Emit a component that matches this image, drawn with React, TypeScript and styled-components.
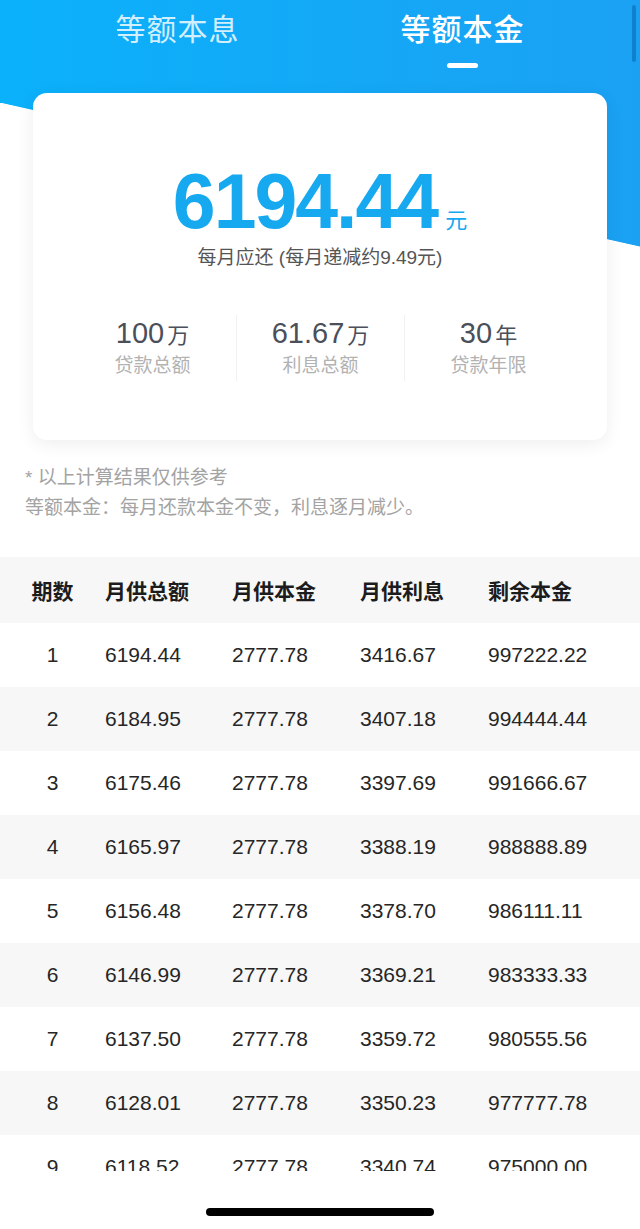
import * as React from "react";
import styled, { createGlobalStyle } from "styled-components";

const GlobalStyle = createGlobalStyle`
  html, body {
    margin: 0;
    padding: 0;
    background: #fff;
  }
  body {
    font-family: "Liberation Sans", "Noto Sans CJK SC", sans-serif;
    -webkit-font-smoothing: antialiased;
  }
`;

const Page = styled.div`
  position: relative;
  width: 640px;
  height: 1229px;
  overflow: hidden;
  display: flex;
  flex-direction: column;
  background: #fff;
`;

// blue header with the slanted lower edge, painted as backgrounds of the top block
const Hero = styled.div`
  display: flex;
  flex-direction: column;
  background:
    linear-gradient(to top right, #fff 50%, transparent 50.3%) 0 103px / 100% 144px no-repeat,
    linear-gradient(to right, #0bb1fb, #1ba1f3) 0 0 / 100% 247px no-repeat;
`;

const Scrollbar = styled.div`
  position: absolute;
  top: 5px;
  right: 4px;
  width: 4px;
  height: 57px;
  border-radius: 2px;
  background: rgba(0, 90, 160, 0.45);
`;

const Tabs = styled.div`
  display: flex;
  justify-content: center;
  padding-top: 12px;
`;

const Tab = styled.div<{ $active?: boolean }>`
  width: 285px;
  display: flex;
  flex-direction: column;
  align-items: center;
  font-size: 30px;
  line-height: 36px;
  letter-spacing: 1px;
  color: ${(p) => (p.$active ? "#fff" : "rgba(255,255,255,0.82)")};
  font-weight: ${(p) => (p.$active ? 500 : 400)};
`;

const Indicator = styled.div<{ $show?: boolean }>`
  margin-top: 15px;
  width: 31px;
  height: 5px;
  border-radius: 3px;
  background: ${(p) => (p.$show ? "#fff" : "transparent")};
`;

const Card = styled.div`
  margin: 25px 33px 0;
  padding: 70px 35px 59px;
  background: #fff;
  border-radius: 14px;
  box-shadow: 0 4px 18px rgba(0, 0, 0, 0.07);
  display: flex;
  flex-direction: column;
  align-items: center;
`;

const Amount = styled.div`
  height: 77px;
  font-size: 77px;
  line-height: 77px;
  font-weight: 700;
  color: #16a9f0;
  letter-spacing: -2px;
  white-space: nowrap;
`;

const Unit = styled.span`
  font-size: 22px;
  line-height: 1;
  font-weight: 400;
  letter-spacing: 0;
  margin-left: 8px;
`;

const Subtitle = styled.div`
  margin-top: 4px;
  font-size: 19px;
  line-height: 28px;
  color: #555;
`;

const Stats = styled.div`
  margin-top: 43px;
  align-self: stretch;
  display: grid;
  grid-template-columns: repeat(3, 1fr);
`;

const Stat = styled.div<{ $divider?: boolean }>`
  display: flex;
  flex-direction: column;
  align-items: center;
  border-left: 1px solid ${(p) => (p.$divider ? "#f1f1f1" : "transparent")};
`;

const StatValue = styled.div`
  height: 36px;
  font-size: 29px;
  line-height: 36px;
  color: #4b4f5a;
  small {
    font-size: 22px;
    line-height: 1;
    margin-left: 3px;
  }
`;

const StatLabel = styled.div`
  font-size: 19px;
  line-height: 30px;
  color: #b2b2b2;
`;

const Notes = styled.div`
  margin-top: 23px;
  padding-left: 25px;
  font-size: 19px;
  line-height: 30px;
  color: #a3a3a3;
`;

const Table = styled.div`
  margin-top: 34px;
  height: 614px;
  overflow: hidden;
`;

const Row = styled.div<{ $shade?: boolean; $head?: boolean }>`
  display: grid;
  grid-template-columns: 105px 127px 128px 128px 1fr;
  align-items: center;
  height: ${(p) => (p.$head ? 66 : 64)}px;
  background: ${(p) => (p.$shade ? "#f7f7f7" : "#fff")};
  font-size: 21px;
  font-weight: ${(p) => (p.$head ? 700 : 400)};
  color: ${(p) => (p.$head ? "#1c1c1c" : "#262626")};
`;

const Cell = styled.div<{ $center?: boolean }>`
  text-align: ${(p) => (p.$center ? "center" : "left")};
  white-space: nowrap;
`;

const BottomBar = styled.div`
  flex: 1;
  display: flex;
  justify-content: center;
  padding-top: 37px;
`;

const HomeIndicator = styled.div`
  width: 228px;
  height: 8px;
  border-radius: 4px;
  background: #000;
`;

const rows = [
  ["1", "6194.44", "2777.78", "3416.67", "997222.22"],
  ["2", "6184.95", "2777.78", "3407.18", "994444.44"],
  ["3", "6175.46", "2777.78", "3397.69", "991666.67"],
  ["4", "6165.97", "2777.78", "3388.19", "988888.89"],
  ["5", "6156.48", "2777.78", "3378.70", "986111.11"],
  ["6", "6146.99", "2777.78", "3369.21", "983333.33"],
  ["7", "6137.50", "2777.78", "3359.72", "980555.56"],
  ["8", "6128.01", "2777.78", "3350.23", "977777.78"],
  ["9", "6118.52", "2777.78", "3340.74", "975000.00"],
];

const stats = [
  { value: "100", unit: "万", label: "贷款总额" },
  { value: "61.67", unit: "万", label: "利息总额" },
  { value: "30", unit: "年", label: "贷款年限" },
];

export default function App() {
  return (
    <Page>
      <GlobalStyle />
      <Hero>
        <Tabs>
          <Tab>
            等额本息
            <Indicator />
          </Tab>
          <Tab $active>
            等额本金
            <Indicator $show />
          </Tab>
        </Tabs>
        <Card>
          <Amount>
            6194.44<Unit>元</Unit>
          </Amount>
          <Subtitle>每月应还 (每月递减约9.49元)</Subtitle>
          <Stats>
            {stats.map((s, i) => (
              <Stat key={s.label} $divider={i > 0}>
                <StatValue>
                  {s.value}
                  <small>{s.unit}</small>
                </StatValue>
                <StatLabel>{s.label}</StatLabel>
              </Stat>
            ))}
          </Stats>
        </Card>
      </Hero>
      <Notes>
        <div>* 以上计算结果仅供参考</div>
        <div>等额本金：每月还款本金不变，利息逐月减少。</div>
      </Notes>
      <Table>
        <Row $head $shade>
          <Cell $center>期数</Cell>
          <Cell>月供总额</Cell>
          <Cell>月供本金</Cell>
          <Cell>月供利息</Cell>
          <Cell>剩余本金</Cell>
        </Row>
        {rows.map((r, i) => (
          <Row key={r[0]} $shade={i % 2 === 1}>
            {r.map((c, j) => (
              <Cell key={j} $center={j === 0}>
                {c}
              </Cell>
            ))}
          </Row>
        ))}
      </Table>
      <BottomBar>
        <HomeIndicator />
      </BottomBar>
      <Scrollbar />
    </Page>
  );
}
